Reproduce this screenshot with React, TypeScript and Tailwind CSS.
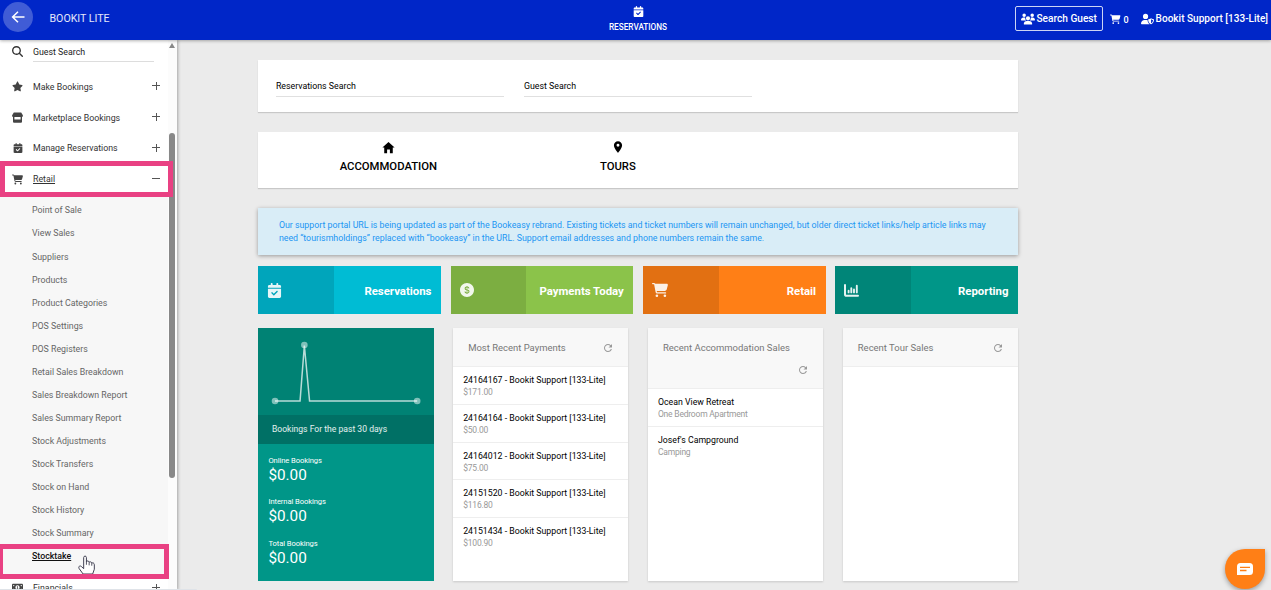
import clsx from 'clsx';
import type { ReactNode } from 'react';
import { AiFillDollarCircle } from 'react-icons/ai';
import {
  FaCalendarCheck,
  FaCartShopping,
  FaMagnifyingGlass,
  FaMoneyBill1,
  FaStar,
  FaUserShield,
  FaUsers,
} from 'react-icons/fa6';
import { IoMdHome } from 'react-icons/io';
import { MdLocationOn, MdRefresh } from 'react-icons/md';

const retailLinks = [
  'Point of Sale',
  'View Sales',
  'Suppliers',
  'Products',
  'Product Categories',
  'POS Settings',
  'POS Registers',
  'Retail Sales Breakdown',
  'Sales Breakdown Report',
  'Sales Summary Report',
  'Stock Adjustments',
  'Stock Transfers',
  'Stock on Hand',
  'Stock History',
  'Stock Summary',
  'Stocktake',
];

const payments = [
  { title: '24164167 - Bookit Support [133-Lite]', sub: '$171.00' },
  { title: '24164164 - Bookit Support [133-Lite]', sub: '$50.00' },
  { title: '24164012 - Bookit Support [133-Lite]', sub: '$75.00' },
  { title: '24151520 - Bookit Support [133-Lite]', sub: '$116.80' },
  { title: '24151434 - Bookit Support [133-Lite]', sub: '$100.90' },
];

const accommodation = [
  { title: 'Ocean View Retreat', sub: 'One Bedroom Apartment' },
  { title: "Josef's Campground", sub: 'Camping' },
];

const totals = ['Online Bookings', 'Internal Bookings', 'Total Bookings'];

function Header() {
  return (
    <header className="relative z-20 flex h-10 shrink-0 items-start bg-[#0026c8] text-white shadow-[0_1px_3px_rgba(0,0,0,0.3)]">
      <div className="ml-[3px] mt-[2px] flex size-[30px] items-center justify-center rounded-full bg-white/25">
        <svg viewBox="0 0 14 12" className="h-3 w-[14px]" fill="none" stroke="white" strokeWidth="1.5">
          <path d="M13.5 6H1.5M7 .7 1.6 6 7 11.3" />
        </svg>
      </div>
      <span className="ml-[16.5px] mt-[11px] text-[10.6px] leading-4 text-white/90">BOOKIT LITE</span>

      <div className="absolute left-[578px] top-[6px] flex w-[120px] flex-col items-center">
        <FaCalendarCheck className="size-[11px]" />
        <span className="mt-[5px] text-[8.2px] font-medium leading-[10px]">RESERVATIONS</span>
      </div>

      <div className="ml-auto flex items-center pt-[6px]">
        <div className="flex h-[25px] w-[88px] items-center rounded-[2px] border border-white/80 pl-[5px]">
          <FaUsers className="h-[12px] w-[14px]" />
          <span className="ml-[1px] pt-px text-[10.15px] font-medium leading-4">Search Guest</span>
        </div>
        <FaCartShopping className="ml-[7px] mt-[2px] size-[10.5px]" />
        <span className="ml-[2.5px] mt-[3px] text-[9px] font-medium leading-4">0</span>
        <FaUserShield className="ml-[12px] h-[12px] w-[13px]" />
        <span className="ml-[2px] mr-[3px] pt-px text-[10.05px] font-medium leading-4">Bookit Support [133-Lite]</span>
      </div>
    </header>
  );
}

function StoreIcon() {
  return (
    <svg viewBox="0 0 11 11" className="size-[11px]" fill="currentColor">
      <path d="M1.8.5H9.2L11 3.4Q11 5 9.5 5H1.5Q0 5 0 3.4Z" />
      <path d="M1 4.5H2.4V7.4H8.6V4.5H10V9.7Q10 10.7 9 10.7H2Q1 10.7 1 9.7Z" />
    </svg>
  );
}

interface MenuItemProps {
  icon: ReactNode;
  label: string;
  open?: boolean;
}

function MenuItem({ icon, label, open }: MenuItemProps) {
  return (
    <div className="flex h-[30.9px] shrink-0 items-center text-[#444]">
      <span className="ml-3 flex w-[11px] justify-center text-[11px]">{icon}</span>
      <span
        className={clsx('ml-[10px] pt-[0.5px] text-[8.8px] leading-4 text-[#333]', open && 'underline')}
      >
        {label}
      </span>
      <svg viewBox="0 0 8 8" className="ml-auto mr-[8px] size-2" stroke="#555" strokeWidth="1">
        <path d={open ? 'M0 3.5H8' : 'M0 3.5H8M4.5 0V8'} />
      </svg>
    </div>
  );
}

function Sidebar() {
  return (
    <aside className="relative z-10 flex w-[177px] shrink-0 bg-[#fcfcfc] shadow-[1px_0_3px_rgba(0,0,0,0.3)]">
      <div className="flex h-[550px] w-[168px] shrink-0 flex-col overflow-hidden bg-white">
        <div className="flex h-[31px] shrink-0">
          <FaMagnifyingGlass className="ml-3 mt-[6px] size-[11px] text-[#333]" />
          <div className="ml-[10px] mt-[4px] h-[18px] w-[121px] border-b border-[#ddd] text-[8.8px] leading-4 text-[#222]">
            Guest Search
          </div>
        </div>
        <MenuItem icon={<FaStar />} label="Make Bookings" />
        <MenuItem icon={<StoreIcon />} label="Marketplace Bookings" />
        <MenuItem icon={<FaCalendarCheck className="text-[10px]" />} label="Manage Reservations" />
        <MenuItem icon={<FaCartShopping />} label="Retail" open />
        <div className="h-[384px] shrink-0 bg-[#f7f7f7] pt-[5px]">
          {retailLinks.map((link) => (
            <div
              key={link}
              className={clsx(
                'flex h-[23.03px] items-center pl-8 text-[8.8px]',
                link === 'Stocktake' ? 'font-medium text-[#111] underline' : 'text-[#666]',
              )}
            >
              {link}
            </div>
          ))}
        </div>
        <div className="-mt-[6.5px]">
          <MenuItem icon={<FaMoneyBill1 />} label="Financials" />
        </div>
      </div>
      <div className="flex w-[9px] flex-col items-center pr-[2px]">
        <div className="mt-[3px] border-x-[3px] border-b-[5px] border-x-transparent border-b-[#888]" />
        <div className="mt-[85px] h-[345px] w-[6px] rounded-full bg-[#888]" />
      </div>
      {/* highlights over the open section and its current link */}
      <div className="absolute left-0 top-[121px] h-[36px] w-[173px] border-5 border-[#e94183]" />
      <svg viewBox="0 0 18 20" className="absolute left-[77.5px] top-[514.5px] h-[19.5px] w-[18px]">
        <path
          d="M5 19.5 1 14C-.2 12 1.6 10.4 3.2 11.8L5.6 14V2.6C5.6.6 8.4.6 8.4 2.6V6.6C9 5.8 11 6 11.2 7.4C11.8 6.6 13.8 7 13.9 8.4C14.6 7.6 16.5 8 16.5 10V14.6L14.8 19.5Z"
          fill="white"
          stroke="#3b3b4d"
          strokeWidth="1"
        />
        <path d="M8.4 6V10M11.2 7.4V10.6M13.9 8.4V11" stroke="#3b3b4d" strokeWidth=".9" />
      </svg>
      <div className="absolute left-0 top-[504px] h-[35px] w-[169px] border-5 border-l-3 border-[#e94183]" />
    </aside>
  );
}

function BarChartIcon() {
  return (
    <svg viewBox="0 0 15 13" className="h-[13px] w-[15px]" fill="none" stroke="currentColor" strokeLinecap="round">
      <path d="M1 1V10.2Q1 11.8 2.6 11.8H14" strokeWidth="2" />
      <path d="M4.6 6.8V8.4M7.3 4.3V8.4M10 5.5V8.4M12.8 1.8V8.4" strokeWidth="1.9" />
    </svg>
  );
}

interface TileProps {
  label: string;
  icon: ReactNode;
  light: string;
  dark: string;
}

function Tile({ label, icon, light, dark }: TileProps) {
  return (
    <div className={clsx('flex h-[48px] items-center text-white', light)}>
      <div className={clsx('flex h-full w-[75.5px] items-center pl-[8.5px]', dark)}>
        <span className="opacity-90">{icon}</span>
      </div>
      <span className="ml-auto mr-[9.5px] pt-[2px] text-[11.4px] font-bold leading-4">{label}</span>
    </div>
  );
}

interface PanelProps {
  title: string;
  tall?: boolean;
  items?: { title: string; sub: string }[];
}

function Panel({ title, tall, items = [] }: PanelProps) {
  return (
    <div className="h-[253px] bg-white shadow-[0_1px_2px_rgba(0,0,0,0.15)]">
      <div
        className={clsx(
          'flex flex-wrap content-start items-center justify-between border-b border-[#eee] bg-[#f8f8f8] pl-[15px] pr-[14px] pt-[12px] text-[#777]',
          tall ? 'h-[61px]' : 'h-[39px]',
        )}
      >
        <span className={clsx('text-[9.48px] leading-4', tall && 'w-full')}>{title}</span>
        <MdRefresh className={clsx('size-[12px] text-[#999]', tall && 'ml-auto mt-[7.5px]')} />
      </div>
      {items.map((item, i) => (
        <div
          key={item.title}
          className={clsx(
            'h-[37.8px] pl-[10px] pt-[7px] leading-3',
            i < items.length - 1 && 'border-b border-[#eee]',
          )}
        >
          <div className="whitespace-nowrap text-[8.75px] text-black">{item.title}</div>
          <div className="text-[8.5px] tracking-[-0.21px] text-[#999]">{item.sub}</div>
        </div>
      ))}
    </div>
  );
}

function BookingsPanel() {
  return (
    <div className="h-[253px] bg-[#009688] text-white">
      <svg viewBox="0 0 175 87" className="h-[87px] w-full bg-[#008274]" preserveAspectRatio="none">
        <path d="M17 73H42L46.3 17.5 51.5 73H159" fill="none" stroke="#b8dcd8" strokeWidth="1.5" />
        <g fill="#fff" fillOpacity=".5">
          <circle cx="17" cy="73" r="3.3" />
          <circle cx="46.3" cy="17" r="3.3" />
          <circle cx="159" cy="73" r="3.3" />
        </g>
      </svg>
      <div className="flex h-[28.5px] items-center bg-[#007065] pl-[13.5px] text-[8.6px] text-white/90">
        Bookings For the past 30 days
      </div>
      {totals.map((label) => (
        <div key={label} className="h-[41.5px] pl-[10px] pt-[12px]">
          <div className="text-[7.6px] leading-[10px] tracking-[-0.08px]">{label}</div>
          <div className="text-[15.3px] leading-[18px]">$0.00</div>
        </div>
      ))}
    </div>
  );
}

export default function App() {
  return (
    <div className="relative flex h-[590px] w-[1271px] flex-col overflow-hidden bg-[#ebebeb] font-['Roboto',sans-serif]">
      <Header />
      <div className="flex flex-1">
        <Sidebar />
        <main className="ml-[81.4px] w-[759.6px] pt-5">
          <div className="flex h-[51.5px] gap-5 bg-white pl-[17.5px] pt-[18px] text-[8.8px] leading-4 shadow-[0_1px_1px_rgba(0,0,0,0.15)]">
            <div className="h-[19px] w-[228px] border-b border-[#e0e0e0]">Reservations Search</div>
            <div className="h-[19px] w-[228px] border-b border-[#e0e0e0]">Guest Search</div>
          </div>

          <div className="mt-[20.5px] flex h-[55.5px] bg-white pl-[15px] pt-[8px] text-[11.3px] font-medium leading-4 shadow-[0_1px_1px_rgba(0,0,0,0.15)]">
            <div className="flex w-[230px] flex-col items-center">
              <IoMdHome className="size-[15px]" />
              <span className="mt-[4px]">ACCOMMODATION</span>
            </div>
            <div className="flex w-[229px] flex-col items-center">
              <MdLocationOn className="size-[14px]" />
              <span className="mt-[5px]">TOURS</span>
            </div>
          </div>

          <div className="mt-[20.5px] h-[46.5px] whitespace-nowrap bg-[#d9edf7] pl-[20.5px] pt-[11px] text-[8.8px] leading-[12.8px] text-[#2196f3] shadow-[0_1px_4px_rgba(0,0,0,0.35)]">
            Our support portal URL is being updated as part of the Bookeasy rebrand. Existing tickets and ticket
            numbers will remain unchanged, but older direct ticket links/help article links may
            <br />
            need “tourismholdings” replaced with “bookeasy” in the URL. Support email addresses and phone numbers
            remain the same.
          </div>

          <div className="mt-[11.5px] grid grid-cols-4 gap-[9.75px]">
            <Tile
              label="Reservations"
              icon={<FaCalendarCheck className="size-[15px]" />}
              light="bg-[#00bcd4]"
              dark="bg-[#00a5bb]"
            />
            <Tile
              label="Payments Today"
              icon={<AiFillDollarCircle className="size-[16px]" />}
              light="bg-[#8bc34a]"
              dark="bg-[#7cae41]"
            />
            <Tile
              label="Retail"
              icon={<FaCartShopping className="size-[16px]" />}
              light="bg-[#ff7f16]"
              dark="bg-[#e27012]"
            />
            <Tile label="Reporting" icon={<BarChartIcon />} light="bg-[#009688]" dark="bg-[#008578]" />
          </div>

          <div className="mt-[14px] grid grid-cols-4 gap-[19.6px]">
            <BookingsPanel />
            <Panel title="Most Recent Payments" items={payments} />
            <Panel title="Recent Accommodation Sales" items={accommodation} tall />
            <Panel title="Recent Tour Sales" />
          </div>
        </main>
      </div>

      {/* browser status strip */}
      <div className="absolute bottom-0 left-0 z-20 h-[1px] w-[197px] rounded-tr-sm bg-[#dfe3e8]" />

      <div className="absolute bottom-[1px] right-[6px] flex size-10 items-center justify-center rounded-full rounded-tr-[4px] bg-[#ff7f16] shadow-[0_2px_5px_rgba(0,0,0,0.35)]">
        <svg viewBox="0 0 16 12" className="h-3 w-4">
          <path d="M3.5 0H12.5Q16 0 16 3.5V8.5Q16 12 12.5 12H0V3.5Q0 0 3.5 0Z" fill="white" />
          <path d="M3 4.3H13M3 7.5H9.5" stroke="#ff7f16" strokeWidth="1.3" />
        </svg>
      </div>
    </div>
  );
}
